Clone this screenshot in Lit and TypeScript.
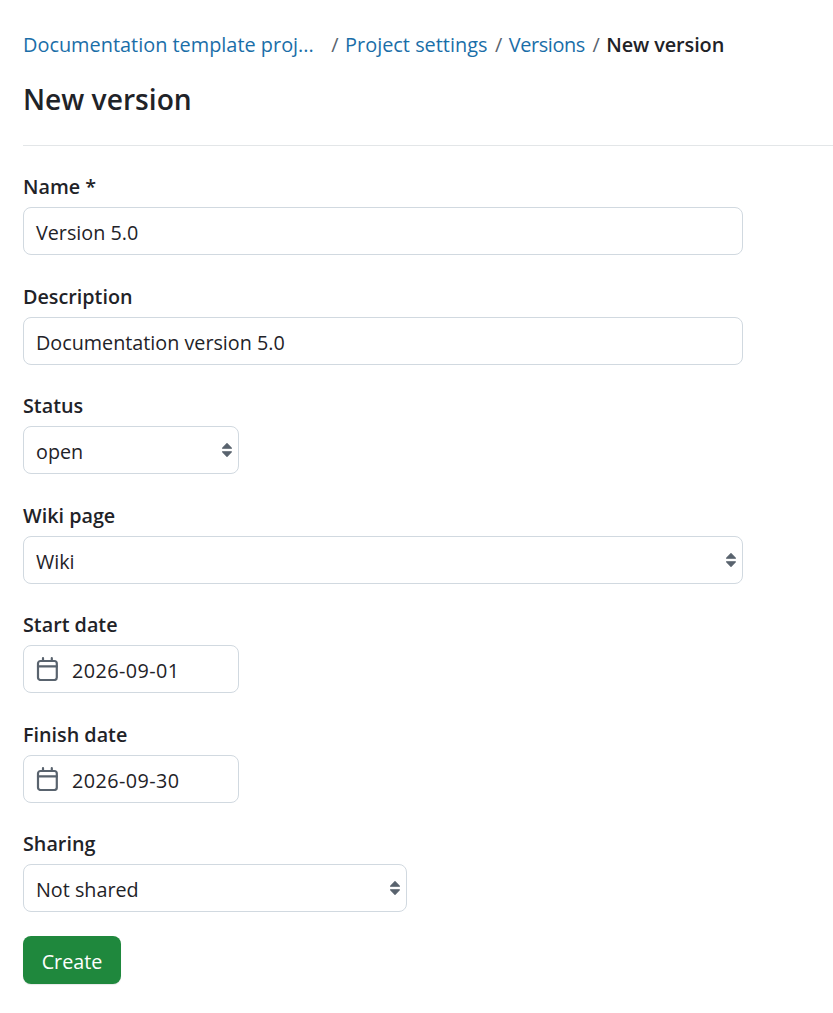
import { LitElement, html, css } from "lit";
import { customElement } from "lit/decorators.js";

const calendar = html`<svg class="cal" width="22" height="24" viewBox="0 0 22 24" fill="none" stroke="#59636e" stroke-width="2.2" stroke-linecap="round" stroke-linejoin="round"><rect x="2" y="4" width="18.8" height="19" rx="2.5"/><path d="M7 1.2V4M15.8 1.2V4M2 9.4h18.8"/></svg>`;
const caret = html`<svg class="caret" width="12" height="16" viewBox="0 0 12 16"><path d="M6 1.6l4.4 4.6H1.6zM6 14.4l-4.4-4.6h8.8z" fill="#59636e" stroke="#59636e" stroke-width="1.2" stroke-linejoin="round"/></svg>`;

@customElement("app-root")
export class AppRoot extends LitElement {
  static styles = css`
    :host { display: block; font-family: "Open Sans", "Noto Sans", sans-serif; color: #1f2328; font-size: 19.75px; }
    .page { padding: 31px 0 29px 23px; display: flex; flex-direction: column; }
    .crumbs { display: flex; align-items: center; height: 28px; line-height: 28px; white-space: nowrap; font-size: 19.9px; }
    .crumbs a { color: #1a6ea8; }
    .sep { margin: 0 6.5px 0 7.5px; color: #59636e; }
    .first { margin-right: 10px; }
    .tight { letter-spacing: -0.4px; }
    .current { font-weight: 600; letter-spacing: -0.1px; }
    h1 { font-size: 28.2px; font-weight: 600; margin: 20px 0 0; line-height: 40px; }
    hr { border: 0; border-top: 1px solid #e3e6e8; margin: 26px 0 0; }
    .field { display: flex; flex-direction: column; margin-top: 27.5px; }
    hr + .field { margin-top: 27px; }
    label { font-weight: 600; line-height: 28px; height: 28px; margin-bottom: 6px; }
    .ctl { box-sizing: border-box; height: 48px; border: 1px solid #d1d9e0; border-radius: 8px; background: #fff; display: flex; align-items: center; padding: 4px 5px 0 12px; line-height: 28px; justify-content: space-between; }
    .full { width: 720px; }
    .small { width: 216px; }
    .med { width: 384px; }
    .date { justify-content: flex-start; gap: 14px; padding-left: 12px; letter-spacing: 0.45px; }
    .caret { margin-top: -4px; }
    .cal { margin-top: -4px; }
    .btn { align-self: flex-start; margin-top: 24px; height: 48px; width: 98px; box-sizing: border-box; border: 0; border-radius: 8px; background: #1f883d; color: #fff; font: inherit; padding: 2px 0 0; box-shadow: 0 1px 1px rgba(31,35,40,.1); }
  `;
  render() {
    return html`<div class="page">
      <div class="crumbs"><a class="first">Documentation template proj...</a><span class="sep">/</span><a>Project settings</a><span class="sep">/</span><a class="tight">Versions</a><span class="sep">/</span><span class="current">New version</span></div>
      <h1>New version</h1>
      <hr />
      <div class="field"><label>Name *</label><div class="ctl full">Version 5.0</div></div>
      <div class="field"><label>Description</label><div class="ctl full">Documentation version 5.0</div></div>
      <div class="field"><label>Status</label><div class="ctl small">open${caret}</div></div>
      <div class="field"><label>Wiki page</label><div class="ctl full">Wiki${caret}</div></div>
      <div class="field"><label>Start date</label><div class="ctl small date">${calendar}2026-09-01</div></div>
      <div class="field"><label>Finish date</label><div class="ctl small date">${calendar}2026-09-30</div></div>
      <div class="field"><label>Sharing</label><div class="ctl med">Not shared${caret}</div></div>
      <button class="btn">Create</button>
    </div>`;
  }
}
